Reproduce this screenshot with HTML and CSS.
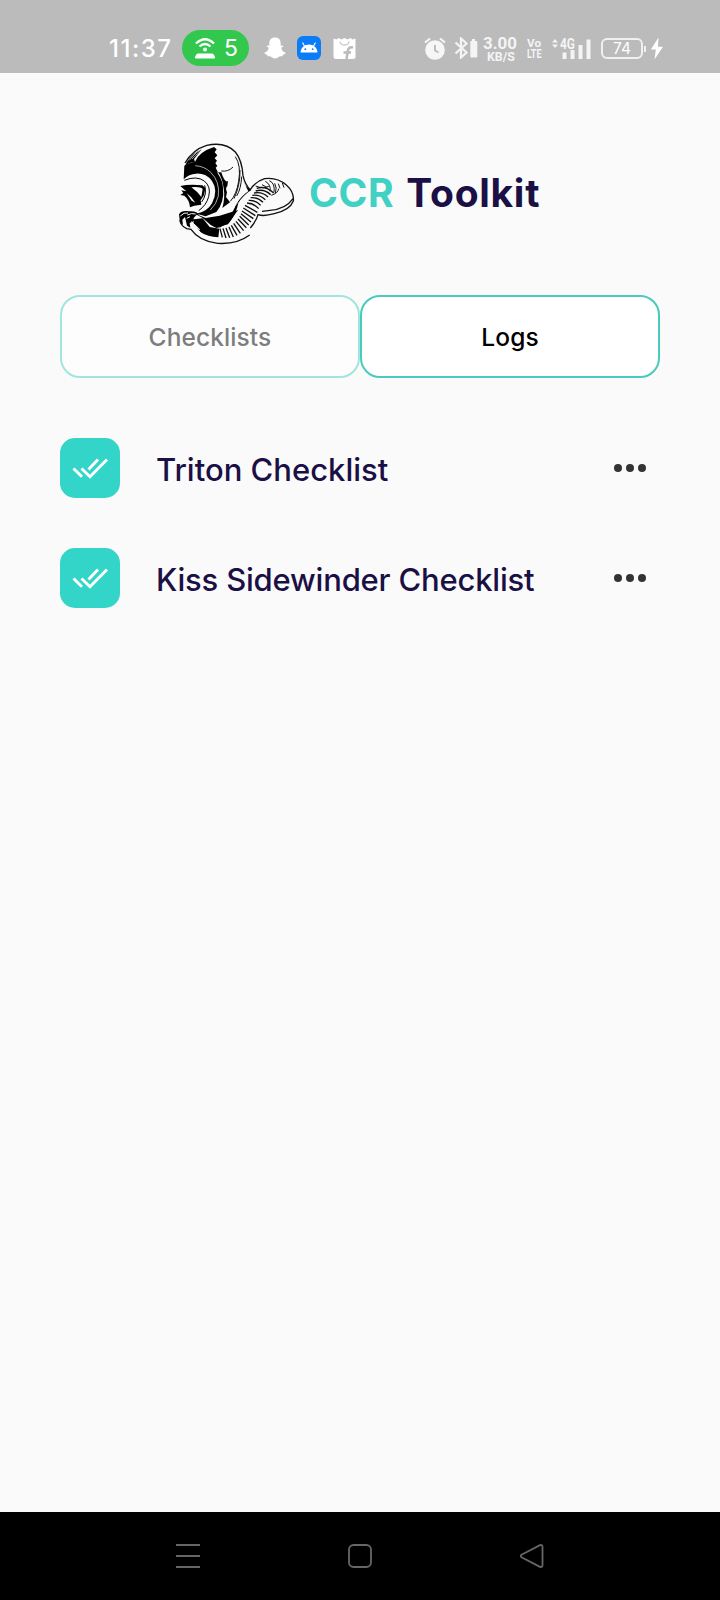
FILE: index.html
```html
<!DOCTYPE html>
<html lang="en">
<head>
  <meta charset="UTF-8">
  <meta name="viewport" content="width=device-width, initial-scale=1.0">
  <title>CCR Toolkit</title>
  <link rel="stylesheet" href="styles.css">
</head>
<body>
  <div class="status-bar">
    <span class="clock">11:37</span>
    <div class="hotspot">
      <svg width="22" height="24" viewBox="0 0 22 24">
        <path d="M2 7.500Q11-1 20 7.500M5.500 10.500Q11 5.500 16.500 10.500" fill="none" stroke="#fff" stroke-width="2.200"/>
        <circle cx="11" cy="13.500" r="2" fill="#fff"/>
        <path d="M4 17.500h14q1.500 0 2 1.500l1 2q.5 1.500-1 1.500H2q-1.500 0-1-1.500l1-2q.5-1.500 2-1.500z" fill="#fff"/>
      </svg>
      <span>5</span>
    </div>
    <svg class="snap" width="22" height="22" viewBox="0 0 22 22">
      <path d="M11 .5c4 0 5.800 2.600 5.700 6v2.300l2.200-.2c.8.600.3 1.400-1.600 2.100.4 2.400 1.900 4.300 4.300 5 .2 1.300-1.400 1.600-2.700 1.900l-.5 1.600c-2.500-.2-3 .2-4.500 1.300-2 1.300-3.800 1.300-5.800 0-1.500-1.100-2-1.500-4.500-1.300l-.5-1.600C1.800 17.300.2 17 .4 15.700c2.400-.7 3.900-2.600 4.300-5C2.800 10 2.300 9.200 3.100 8.600l2.200.2V6.500C5.200 3.100 7 .5 11 .5z" fill="#fff"/>
    </svg>
    <svg class="droid" width="24" height="24" viewBox="0 0 24 24">
      <rect width="24" height="24" rx="6" fill="#0a7cf8"/>
      <path d="M3.500 16.500c.4-4.900 3.800-8 8.500-8s8.100 3.100 8.500 8z" fill="#fff"/>
      <path d="M5.500 6.500l2.200 4M18.500 6.500l-2.200 4" stroke="#fff" stroke-width="1.100"/>
      <circle cx="8.300" cy="13.200" r=".9" fill="#0a7cf8"/>
      <circle cx="15.700" cy="13.200" r=".9" fill="#0a7cf8"/>
    </svg>
    <svg class="flip" width="23" height="24" viewBox="0 0 23 24">
      <path d="M.5 2.500l3 1 2-1.500 3 1.500 3-1.500 3 1.500 3-1.500 2 1.500 3-1v18q0 2.500-2.500 2.500H3Q.5 23 .5 20.500z" fill="#fff"/>
      <path d="M7 5.500q.5 3.500 4.500 3.500T16 5.500" fill="none" stroke="#c8c8c8" stroke-width="1.300"/>
      <path d="M20 11.500q-4.500-1-5.200 3.500L13.500 23M10.500 16.500h7.500" fill="none" stroke="#bbb" stroke-width="2.600"/>
    </svg>
    <svg class="alarm" width="22" height="23" viewBox="0 0 22 23">
      <circle cx="11" cy="13" r="9.800" fill="#f6f6f6"/>
      <path d="M1 5.500L6 1.500M21 5.500L16 1.500" stroke="#f6f6f6" stroke-width="2.200"/>
      <path d="M11 8v5.500l3.500 2" fill="none" stroke="#bbb" stroke-width="1.900"/>
    </svg>
    <svg class="bluetooth" width="24" height="22" viewBox="0 0 24 22">
      <path d="M1.500 5.500l11 10-5.500 5V1.500l5.500 5-11 10" fill="none" stroke="#f4f4f4" stroke-width="2.200"/>
      <path d="M18 2h3v2H22.500q.8 0 .8.800v14.700q0 1-1 1h-5q-1 0-1-1V4.800q0-.8.800-.8h.9z" fill="#f4f4f4"/>
    </svg>
    <svg class="speed" width="36" height="26" viewBox="0 0 36 26">
      <text x="0" y="13" font-size="16.500" textLength="34" lengthAdjust="spacingAndGlyphs">3.00</text>
      <text x="4" y="25" font-size="12.500" textLength="28" lengthAdjust="spacingAndGlyphs">KB/S</text>
    </svg>
    <svg class="volte" width="16" height="22" viewBox="0 0 16 22">
      <text x="1" y="10" font-size="11.500" textLength="14" lengthAdjust="spacingAndGlyphs">Vo</text>
      <text x="1" y="21" font-size="12" textLength="14.500" lengthAdjust="spacingAndGlyphs">LTE</text>
    </svg>
    <svg class="signal" width="42" height="23" viewBox="0 0 42 23">
      <path d="M1 5.500L4 2l3 3.500zM1 7.500L4 11l3-3.500z" fill="#f4f4f4"/>
      <text x="9" y="11.500" font-size="14" textLength="15" lengthAdjust="spacingAndGlyphs">4G</text>
      <path d="M11.500 15.500h4v6.500h-4zM19.500 13h4v9h-4zM27.500 8h4v14h-4zM35.500 2.500h4V22h-4z" fill="#f4f4f4"/>
    </svg>
    <div class="battery">74</div>
    <svg class="bolt" width="14" height="23" viewBox="0 0 14 23">
      <path d="M8.500.5L.8 12.500h5L4.500 22.500 13 9.800H8z" fill="#fff"/>
    </svg>
  </div>

  <main>
    <header class="brand">
      <svg width="130" height="115" viewBox="0 0 390 345">
        <!-- hood -->
        <path d="M45 84Q68 44 110 31Q166 19 196 51Q216 75 219 122Q225 149 241 165" fill="none" stroke="#111" stroke-width="4"/>
        <path d="M75 80Q88 50 132 36L140 43L134 52L142 61L134 70L141 77L136 84L142 93L137 98L143 110L142 127Q112 96 75 80z" fill="#000"/>
        <path d="M50 82Q66 56 96 42L72 72L76 84Q57 79 44 96z" fill="#000"/>
        <path d="M58 76Q78 48 105 39M66 72Q85 49 115 38" fill="none" stroke="#fafafa" stroke-width="2"/>
        <path d="M154 108Q175 111 189 96M196 65Q214 91 206 139Q200 177 181 199M210 105Q211 150 192 191M215 125Q213 162 200 183" fill="none" stroke="#111" stroke-width="3"/>
        <path d="M154 112Q164 145 174 138L172 153Q165 159 171 172L168 186L180 202L157 219Q166 188 161 160Q157 128 144 112z" fill="#000"/>
        <!-- mask -->
        <path d="M43 92Q76 70 115 92Q157 117 159 158Q164 201 139 231L107 244L80 236Q112 230 126 205Q146 167 126 138Q108 114 78 116Q57 117 41 133z" fill="#000"/>
        <path d="M76 92Q104 94 122 112Q150 139 145 183Q140 207 121 225" fill="none" stroke="#fafafa" stroke-width="2"/>
        <path d="M43 136Q79 121 103 138Q124 155 116 185Q109 211 86 227" fill="none" stroke="#000" stroke-width="3"/>
        <path d="M31 153Q60 146 97 151L106 159L102 181L92 196L94 209L73 212L60 217Q58 194 43 182L31 180L40 174L34 166L49 169z" fill="#000"/>
        <path d="M64 157Q90 154 98 162L94 186Q84 171 64 157M50 175Q66 186 76 203L65 197z" fill="#fafafa"/>
        <path d="M104 151Q112 178 95 201M66 166Q80 175 90 192" fill="none" stroke="#000" stroke-width="3"/>
        <!-- mouthpiece and lower hose -->
        <path d="M27 238Q35 225 57 229Q82 227 87 241L107 249L149 242L185 231L204 225L178 262L151 277L139 279L122 270L98 249L80 239L71 249L72 258L59 264L61 278L51 272L45 246L37 254L39 270L30 263z" fill="#000"/>
        <path d="M31 243Q42 231 54 234M52 240Q65 233 77 237M50 250L60 245" fill="none" stroke="#fafafa" stroke-width="3"/>
        <path d="M72 253L98 250L119 276L148 281L145 307Q113 305 92 292Q81 275 70 266z" fill="#000"/>
        <path d="M70 271L90 284M76 279L95 297M64 260L86 280" stroke="#fafafa" stroke-width="3"/>
        <path d="M30 255Q31 272 50 281L63 283Q87 318 143 325Q200 329 239 300" fill="none" stroke="#111" stroke-width="4"/>
        <!-- shoulder hose -->
        <path d="M219 137Q226 157 244 164Q216 184 205 204Q199 237 174 268L155 273Q183 247 199 207Q217 180 235 169z" fill="#000"/>
        <path d="M238 168Q254 140 284 131Q321 126 349 150Q373 171 370 198Q360 225 313 236Q281 245 264 239Q260 256 241 279M369 191Q347 223 300 226L276 229" fill="none" stroke="#111" stroke-width="4"/>
        <path d="M150 281L157 307M159 280L168 309M168 279L179 308M177 276L190 306M184 271L201 301M191 265L211 295M198 259L221 287M204 252L229 278M209 244L236 270M213 236L243 261M216 228L250 251M220 219L256 242M225 211L262 232M231 204Q252 205 266 221M236 196Q257 195 272 211M242 188Q263 186 279 202M247 181Q269 178 286 194M252 174Q276 169 294 186M257 168Q282 160 302 179M260 160Q287 151 311 174" fill="none" stroke="#111" stroke-width="4"/>
        <path d="M257 153Q280 163 298 153M276 149L292 158M286 139Q304 149 300 169M298 137Q316 145 312 172M314 145Q322 158 316 175M325 146L330 160M337 144L342 158M304 181Q325 174 326 161" fill="none" stroke="#111" stroke-width="3"/>
        <path d="M190 212L204 196M188 220L204 202M178 226L195 216" stroke="#fafafa" stroke-width="2"/>
      </svg>
      <h1><span>CCR</span> Toolkit</h1>
    </header>

    <nav class="tabs">
      <button class="tab inactive">Checklists</button>
      <button class="tab">Logs</button>
    </nav>

    <ul class="checklists">
      <li>
        <div class="tile">
          <svg width="36" height="22" viewBox="0 0 36 22">
            <path d="M1.500 11.500l8.500 8.300M9.500 11.500l8.500 8.300L35 2.500M16.500 12.500L26 2.500" fill="none" stroke="#fff" stroke-width="2.900"/>
          </svg>
        </div>
        <span class="name">Triton Checklist</span>
        <div class="more"><i></i><i></i><i></i></div>
      </li>
      <li>
        <div class="tile">
          <svg width="36" height="22" viewBox="0 0 36 22">
            <path d="M1.500 11.500l8.500 8.300M9.500 11.500l8.500 8.300L35 2.500M16.500 12.500L26 2.500" fill="none" stroke="#fff" stroke-width="2.900"/>
          </svg>
        </div>
        <span class="name long">Kiss Sidewinder Checklist</span>
        <div class="more"><i></i><i></i><i></i></div>
      </li>
    </ul>
  </main>

  <footer class="nav-bar">
    <svg width="24" height="24" viewBox="0 0 24 24"><path d="M0 1h24M0 12h24M0 23h24"/></svg>
    <svg width="24" height="24" viewBox="0 0 24 24"><rect x="1" y="1" width="22" height="22" rx="4.500"/></svg>
    <svg width="24" height="24" viewBox="0 0 24 24"><path d="M1.500 10.700L20 1.200q2.500-.8 2.500 1.800v18q0 2.600-2.500 1.800L1.500 13.300q-1.500-1.300 0-2.600z"/></svg>
  </footer>
</body>
</html>
```
FILE: styles.css
```css
* {
  box-sizing: border-box;
}

body {
  margin: 0;
  height: 1600px;
  display: flex;
  flex-direction: column;
  background: #fafafa;
  font-family: Inter, "Liberation Sans", sans-serif;
  color: #1a1045;
}

svg {
  display: block;
  flex: none;
}

/* Status bar */
.status-bar {
  height: 73px;
  padding: 23px 0 0 109px;
  display: flex;
  align-items: center;
  background: #bbb;
  color: #fff;
}

.clock {
  width: 73px;
  font-size: 24px;
  font-weight: 500;
  letter-spacing: 1.5px;
  white-space: nowrap;
}

.hotspot {
  width: 67px;
  height: 36px;
  padding-left: 12px;
  display: flex;
  align-items: center;
  gap: 8px;
  border-radius: 18px;
  background: #32c84e;
  font-size: 23px;
}

.snap {
  margin-left: 15px;
}

.droid {
  margin-left: 11px;
}

.flip {
  margin-left: 12px;
}

.alarm {
  margin-left: 68px;
}

.bluetooth {
  margin-left: 8px;
}

.speed {
  margin: 2px 0 0 5px;
}

.volte {
  margin-left: 7px;
}

.signal {
  margin-left: 9px;
}

.status-bar text {
  font-family: Roboto, sans-serif;
  font-weight: 700;
  fill: #f4f4f4;
}

.battery {
  position: relative;
  width: 42px;
  height: 21px;
  margin-left: 8px;
  border: 2px solid #f0f0f0;
  border-radius: 6px;
  font-size: 15.5px;
  line-height: 18px;
  text-align: center;
}

.battery::after {
  content: "";
  position: absolute;
  right: -5px;
  top: 6px;
  width: 2px;
  height: 6px;
  background: #f0f0f0;
}

.bolt {
  margin-left: 7px;
}

/* Content */
main {
  flex: 1;
  padding: 62px 60px 0;
}

.brand {
  display: flex;
  align-items: center;
  padding-left: 110px;
}

h1 {
  margin: 0 0 0 9px;
  font-size: 39px;
  line-height: 48px;
  font-weight: 700;
  letter-spacing: 0.7px;
  word-spacing: 2px;
  white-space: nowrap;
}

h1 span {
  color: #40d0c4;
}

.tabs {
  display: flex;
  margin-top: 45px;
}

.tab {
  flex: 1;
  height: 83px;
  padding: 1px 0 0;
  border: 2px solid #48cbbe;
  border-radius: 20px;
  background: #fff;
  color: #000;
  font-family: inherit;
  font-size: 24.5px;
  font-weight: 500;
  letter-spacing: 0.1px;
}

.tab.inactive {
  border-color: #a2e5dc;
  background: #fdfdfd;
  color: #7d7d7d;
}

.checklists {
  margin: 60px 0 0;
  padding: 0;
  list-style: none;
}

.checklists li {
  display: flex;
  align-items: center;
  margin-bottom: 50px;
}

.tile {
  width: 60px;
  height: 60px;
  display: flex;
  align-items: center;
  justify-content: center;
  border-radius: 15px;
  background: #32d5c8;
}

.name {
  flex: 1;
  margin-left: 36px;
  padding-top: 3px;
  font-size: 31px;
  line-height: 40px;
  font-weight: 500;
}

.name.long {
  letter-spacing: -0.2px;
}

.more {
  display: flex;
  gap: 4px;
  margin-right: 14px;
}

.more i {
  width: 8px;
  height: 8px;
  border-radius: 50%;
  background: #333;
}

/* System navigation */
.nav-bar {
  height: 88px;
  padding: 0 176px;
  display: flex;
  align-items: center;
  justify-content: space-between;
  background: #000;
}

.nav-bar svg {
  fill: none;
  stroke: #666;
  stroke-width: 1.8;
}
```
